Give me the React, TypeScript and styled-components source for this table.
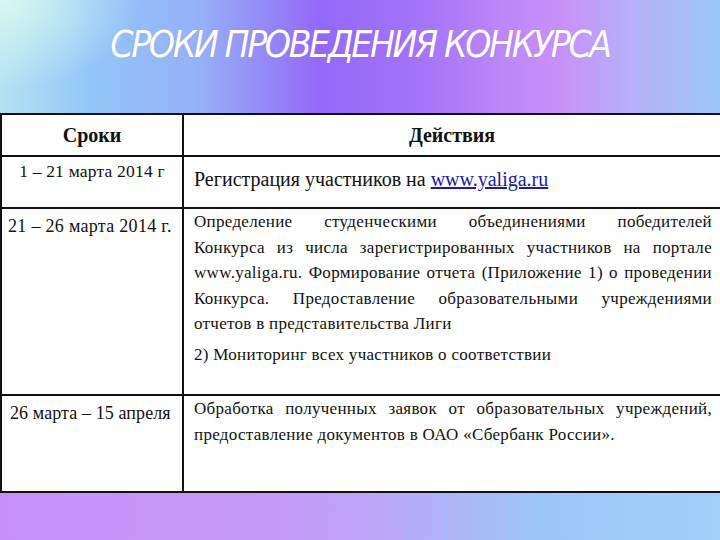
import React, { FC } from "react";
import styled, { createGlobalStyle } from "styled-components";

const GlobalStyle = createGlobalStyle`
  html, body {
    margin: 0;
    padding: 0;
    width: 720px;
    height: 540px;
    overflow: hidden;
    background: #ffffff;
  }
`;

const serif = `"Liberation Serif", "Times New Roman", "DejaVu Serif", serif`;

const Slide = styled.div`
  width: 720px;
  height: 540px;
  display: flex;
  flex-direction: column;
  overflow: hidden;
  font-family: ${serif};
  color: #111;
`;

const Header = styled.header`
  height: 113px;
  flex: none;
  display: flex;
  justify-content: center;
  padding-top: 23px;
  box-sizing: border-box;
  background:
    radial-gradient(ellipse 140px 90px at 0 0, rgba(220, 250, 240, 0.9), rgba(220, 250, 240, 0) 100%),
    linear-gradient(
      90deg,
      #b4e2f2 0px,
      #92c6f8 90px,
      #96b0f8 200px,
      #9468f8 320px,
      #a474f8 420px,
      #bc86f8 500px,
      #c890f8 560px,
      #b6b0f8 630px,
      #9cc6f8 720px
    );
`;

const Title = styled.h1`
  margin: 0;
  padding-left: 0;
  font-family: "DejaVu Sans", "Liberation Sans", sans-serif;
  font-stretch: condensed;
  font-style: oblique;
  font-weight: normal;
  font-size: 37px;
  line-height: 44px;
  letter-spacing: -2.4px;
  color: #fffdf6;
  text-shadow: 0 0 1px rgba(120, 90, 200, 0.35);
  white-space: nowrap;
`;

const Table = styled.table`
  flex: none;
  width: 722px;
  border-collapse: collapse;
  table-layout: fixed;
  background: #ffffff;
  font-family: ${serif};
`;

const Row = styled.tr<{ $h: number }>`
  height: ${(p) => p.$h}px;
`;

const Cell = styled.td<{
  $align?: "left" | "center";
  $pad?: string;
  $size?: number;
  $spacing?: number;
}>`
  border: 2px solid #111;
  padding: ${(p) => p.$pad ?? "4px 8px"};
  vertical-align: top;
  text-align: ${(p) => p.$align ?? "left"};
  font-family: ${serif};
  font-size: ${(p) => p.$size ?? 17}px;
  letter-spacing: ${(p) => p.$spacing ?? 0}px;
  line-height: 1.25;
  white-space: nowrap;
  box-sizing: border-box;
`;

const HeadCell = styled.th`
  border: 2px solid #111;
  padding: 0;
  vertical-align: middle;
  text-align: center;
  font-family: ${serif};
  font-size: 20px;
  font-weight: bold;
`;

const Para = styled.div<{ $gap?: number }>`
  margin-top: ${(p) => p.$gap ?? 0}px;
`;

const Line = styled.div<{ $justify?: boolean }>`
  font-family: ${serif};
  font-size: 17px;
  line-height: 25.5px;
  letter-spacing: 0.3px;
  white-space: nowrap;
  text-align: ${(p) => (p.$justify ? "justify" : "left")};
  text-align-last: ${(p) => (p.$justify ? "justify" : "left")};
`;

const Link = styled.a`
  color: #1a1aa6;
  text-decoration: underline;
`;

const Footer = styled.footer`
  flex: 1;
  background: linear-gradient(
    90deg,
    #c690f8 0px,
    #c49af8 280px,
    #bca6f8 380px,
    #9cc6f8 540px,
    #a2d0f8 720px
  );
`;

const App: FC = () => (
  <Slide>
    <GlobalStyle />
    <Header>
      <Title>СРОКИ ПРОВЕДЕНИЯ КОНКУРСА</Title>
    </Header>
    <Table>
      <colgroup>
        <col style={{ width: "182px" }} />
        <col />
      </colgroup>
      <tbody>
        <Row $h={42}>
          <HeadCell>Сроки</HeadCell>
          <HeadCell>Действия</HeadCell>
        </Row>
        <Row $h={52}>
          <Cell $align="center" $pad="4px 4px" $size={17.5} $spacing={0.2}>
            1 – 21 марта 2014 г
          </Cell>
          <Cell $pad="10px 10px" $size={20}>
            Регистрация участников на <Link href="#">www.yaliga.ru</Link>
          </Cell>
        </Row>
        <Row $h={187}>
          <Cell $pad="6px 6px" $size={18} $spacing={0.3}>
            21 – 26 марта 2014 г.
          </Cell>
          <Cell $pad="0px 8px 0 10px">
            <Para>
              <Line $justify>Определение студенческими объединениями победителей</Line>
              <Line $justify>Конкурса из числа зарегистрированных участников на портале</Line>
              <Line $justify>www.yaliga.ru. Формирование отчета (Приложение 1) о проведении</Line>
              <Line $justify>Конкурса. Предоставление образовательными учреждениями</Line>
              <Line>отчетов в представительства Лиги</Line>
            </Para>
            <Para $gap={5}>
              <Line>2) Мониторинг всех участников о соответствии</Line>
            </Para>
          </Cell>
        </Row>
        <Row $h={97}>
          <Cell $pad="6px 8px" $size={18} $spacing={0.1}>
            26 марта – 15 апреля
          </Cell>
          <Cell $pad="0px 8px 0 10px">
            <Para>
              <Line $justify>Обработка полученных заявок от образовательных учреждений,</Line>
              <Line>предоставление документов в ОАО «Сбербанк России».</Line>
            </Para>
          </Cell>
        </Row>
      </tbody>
    </Table>
    <Footer />
  </Slide>
);

export default App;
